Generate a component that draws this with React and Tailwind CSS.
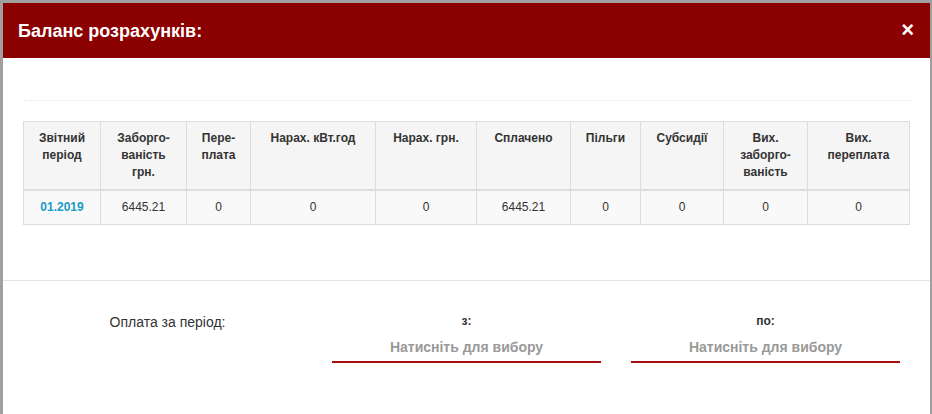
const headers = [
  { label: ['Звітний', 'період'], w: 'w-[77px]' },
  { label: ['Заборго-', 'ваність', 'грн.'], w: 'w-[86px]' },
  { label: ['Пере-', 'плата'], w: 'w-[64px]' },
  { label: ['Нарах. кВт.год'], w: 'w-[125px]' },
  { label: ['Нарах. грн.'], w: 'w-[101px]' },
  { label: ['Сплачено'], w: 'w-[94px]' },
  { label: ['Пільги'], w: 'w-[70px]' },
  { label: ['Субсидії'], w: 'w-[83px]' },
  { label: ['Вих.', 'заборго-', 'ваність'], w: 'w-[84px]' },
  { label: ['Вих.', 'переплата'], w: 'w-[102px]' }
]

const row = ['6445.21', '0', '0', '0', '6445.21', '0', '0', '0', '0']

function PeriodPicker({ label }) {
  return (
    <div className="flex flex-col items-center px-[15px]">
      <div className="text-[12px] leading-[17px] font-bold text-[#333]">{label}</div>
      <div className="mt-[7px] w-full text-center text-[14px] leading-[20px] font-bold text-[#999] pb-[4px] border-b-2 border-[#a30f0f]">
        Натисніть для вибору
      </div>
    </div>
  )
}

export default function App() {
  return (
    <div className="h-[414px] w-[932px] overflow-hidden bg-[#a0a0a0] pt-[3px] pl-[3px] pr-[2px] font-['Liberation_Sans',Arial,sans-serif]">
      <div className="h-full bg-white">
        {/* header */}
        <div className="h-[55px] bg-[#8b0000] flex items-center justify-between pl-[15px] pr-[16px]">
          <h4 className="text-white font-bold text-[18px] leading-none">Баланс розрахунків:</h4>
          <span className="text-white font-bold text-[22px] leading-none -mt-[1px]">×</span>
        </div>

        {/* body */}
        <div className="pt-[42px] px-[20px] pb-[55px]">
          <div className="ml-[1px] mr-[-2px] border-t border-dotted border-[#e6e6e6]" />
          <table className="mt-[20px] w-[886px] table-fixed border-collapse text-[12px] leading-[17px] text-[#333]">
            <thead>
              <tr className="bg-[#f5f5f5]">
                {headers.map((h, i) => (
                  <th key={i} className={`${h.w} align-top text-center font-bold border border-[#ddd] border-b-2 px-[6px] py-[8px]`}>
                    {h.label.map((l, j) => (
                      <div key={j}>{l}</div>
                    ))}
                  </th>
                ))}
              </tr>
            </thead>
            <tbody>
              <tr className="bg-[#f9f9f9]">
                <td className="text-center border border-[#ddd] py-[8px] font-bold text-[#1b9ac6]">01.2019</td>
                {row.map((v, i) => (
                  <td key={i} className="text-center border border-[#ddd] py-[8px]">{v}</td>
                ))}
              </tr>
            </tbody>
          </table>
        </div>

        {/* footer */}
        <div className="border-t border-[#e5e5e5] pt-[32px]">
          <div className="ml-[15px] w-[897px] grid grid-cols-3">
            <div className="text-center text-[14px] leading-[20px] text-[#333] -mt-[1px]">Оплата за період:</div>
            <PeriodPicker label="з:" />
            <PeriodPicker label="по:" />
          </div>
        </div>
      </div>
    </div>
  )
}
